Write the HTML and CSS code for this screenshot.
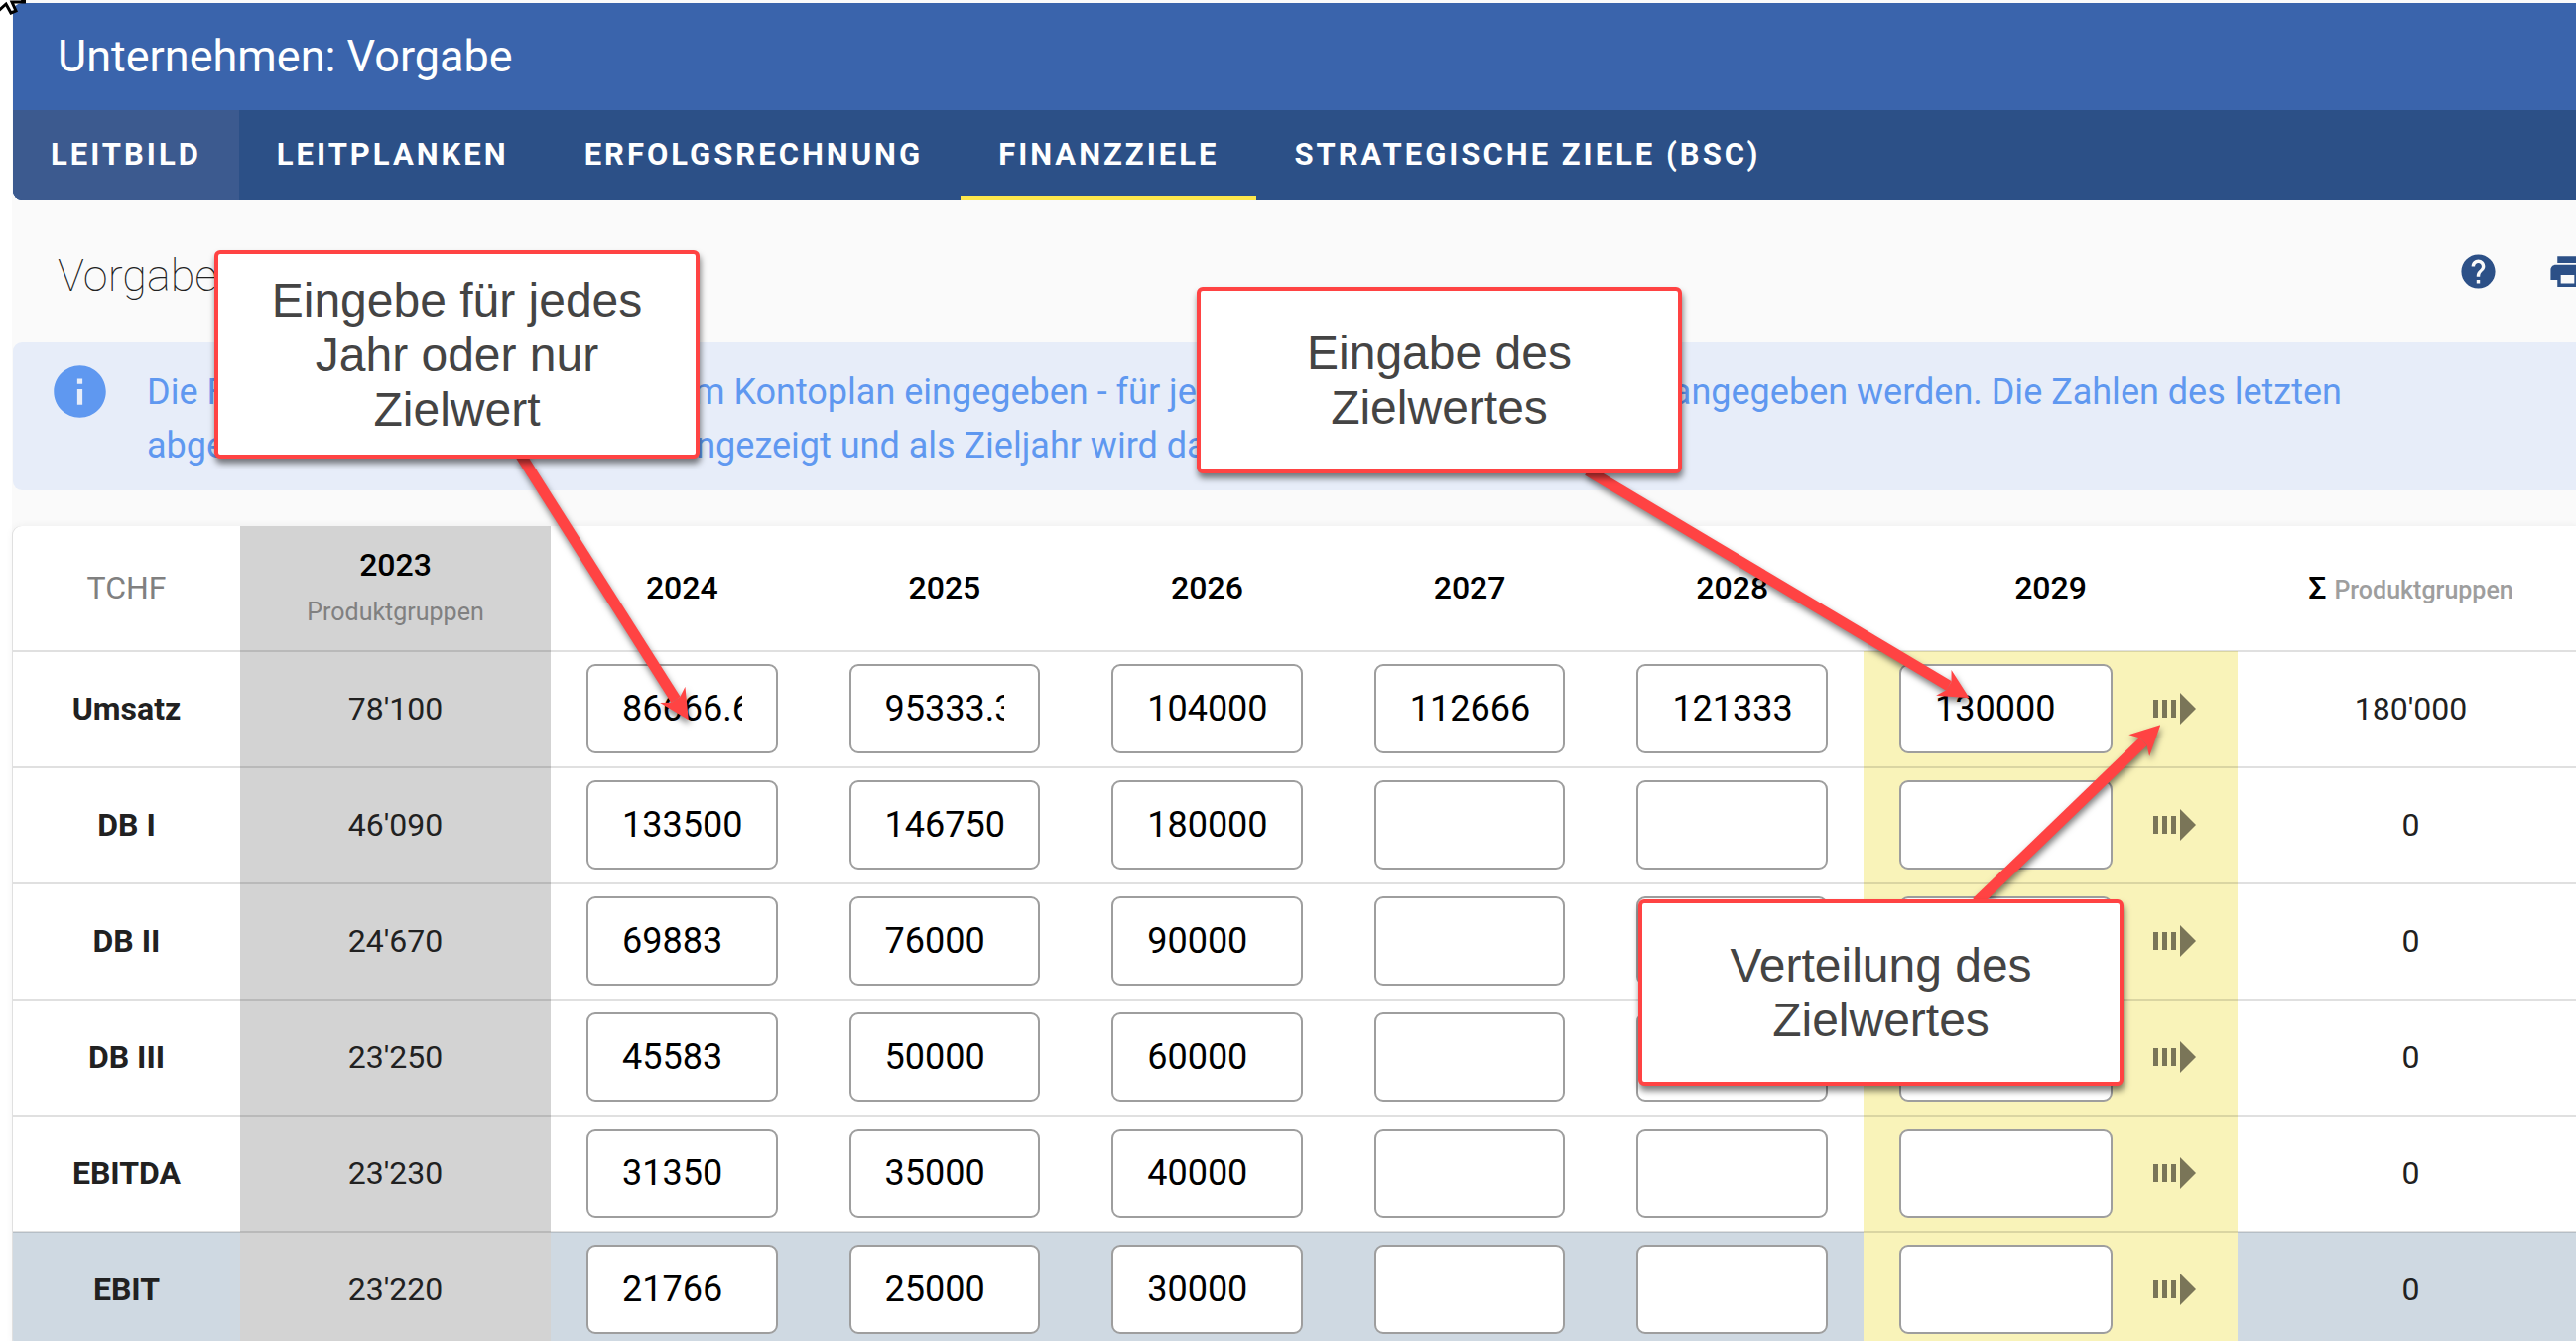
FILE: index.html
```html
<!DOCTYPE html>
<html lang="de">
<head>
    <meta charset="UTF-8">
    <meta name="viewport" content="width=device-width, initial-scale=1.0">
    <title>Unternehmen: Vorgabe</title>
    <link rel="stylesheet" href="styles.css">
</head>
<body>
    <main class="page">
        <header class="app-bar">
            <h1>Unternehmen: Vorgabe</h1>
            <nav class="tabs">
                <a href="#leitbild" class="tab hover">Leitbild</a>
                <a href="#leitplanken" class="tab">Leitplanken</a>
                <a href="#erfolgsrechnung" class="tab">Erfolgsrechnung</a>
                <a href="#finanzziele" class="tab active">Finanzziele</a>
                <a href="#bsc" class="tab">Strategische Ziele (BSC)</a>
            </nav>
        </header>

        <div class="toolbar">
            <h2>Vorgabe</h2>
            <button type="button" class="icon-button" aria-label="Hilfe">
                <svg viewBox="0 0 24 24"><path d="M12 2C6.48 2 2 6.48 2 12s4.48 10 10 10 10-4.48 10-10S17.52 2 12 2zm1 17h-2v-2h2v2zm2.07-7.75l-.9.92C13.45 12.9 13 13.5 13 15h-2v-.5c0-1.1.45-2.1 1.17-2.83l1.24-1.26c.37-.36.59-.86.59-1.41 0-1.1-.9-2-2-2s-2 .9-2 2H8c0-2.21 1.79-4 4-4s4 1.79 4 4c0 .88-.36 1.68-.93 2.25z"/></svg>
            </button>
            <button type="button" class="icon-button" aria-label="Drucken">
                <svg viewBox="0 0 24 24"><path d="M19 8H5c-1.66 0-3 1.34-3 3v6h4v4h12v-4h4v-6c0-1.66-1.34-3-3-3zm-3 11H8v-5h8v5zm3-7c-.55 0-1-.45-1-1s.45-1 1-1 1 .45 1 1-.45 1-1 1zm-1-9H6v4h12V3z"/></svg>
            </button>
        </div>

        <div class="info">
            <svg viewBox="0 0 24 24"><path d="M12 2C6.48 2 2 6.48 2 12s4.48 10 10 10 10-4.48 10-10S17.52 2 12 2zm1 15h-2v-6h2v6zm0-8h-2V7h2v2z"/></svg>
            <p>Die Finanzziele werden gemäss dem Kontoplan eingegeben - für jedes Jahr kann ein Zahlenwert angegeben werden. Die Zahlen des letzten<br>
            abgeschlossenen Jahres werden angezeigt und als Zieljahr wird das letzte Jahr verwendet.</p>
        </div>

        <div class="card">
            <table>
                <colgroup>
                    <col class="col-name">
                    <col class="col-actual">
                    <col span="5">
                    <col class="col-target">
                    <col class="col-sum">
                </colgroup>
                <thead>
                    <tr>
                        <th class="unit">TCHF</th>
                        <th class="actual">2023<small>Produktgruppen</small></th>
                        <th>2024</th>
                        <th>2025</th>
                        <th>2026</th>
                        <th>2027</th>
                        <th>2028</th>
                        <th>2029</th>
                        <th>Σ <small>Produktgruppen</small></th>
                    </tr>
                </thead>
                <tbody id="rows"></tbody>
            </table>
        </div>
    </main>

    <svg class="arrows" aria-hidden="true">
        <defs>
            <marker id="head" markerUnits="userSpaceOnUse" markerWidth="30" markerHeight="30" refX="6" refY="15" orient="auto">
                <path d="M0 0L30 15L0 30L6 20V10z"/>
            </marker>
        </defs>
        <line x1="525" y1="459" x2="681" y2="705"/>
        <line x1="1600" y1="474" x2="1964" y2="691"/>
        <line x1="1992" y1="909" x2="2160" y2="747"/>
    </svg>
    <div class="callout callout-years">Eingebe für jedes<br>Jahr oder nur<br>Zielwert</div>
    <div class="callout callout-target">Eingabe des<br>Zielwertes</div>
    <div class="callout callout-spread">Verteilung des<br>Zielwertes</div>

    <svg class="cursor" viewBox="0 0 26 15" aria-hidden="true">
        <path d="M-4 -20V13L6 4L11 13L16 11L12 2H26z"/>
    </svg>

    <script src="script.js"></script>
</body>
</html>
```
FILE: styles.css
```css
* {
    box-sizing: border-box;
}
body {
    margin: 0;
    height: 100vh;
    position: relative;
    overflow: hidden;
    background: #fff;
    color: #212121;
    font-family: Roboto, sans-serif;
    font-size: 32px;
}
h1, h2, p {
    margin: 0;
}
.page {
    min-height: 100vh;
    margin: 0 -8px 0 12px;
    padding: 3px 0 0 1px;
    background: #fafafa;
}

/* header */
.app-bar {
    background: #3a64ac;
    color: #fff;
    border-radius: 9px;
    overflow: hidden;
}
.app-bar h1 {
    padding: 0 45px;
    font-size: 45px;
    font-weight: 400;
    line-height: 108px;
}
.tabs {
    display: flex;
    background: #2c5087;
}
.tab {
    padding: 0 38px;
    line-height: 90px;
    color: #fff;
    font-size: 31px;
    font-weight: 700;
    letter-spacing: 3px;
    text-transform: uppercase;
    text-decoration: none;
}
.tab.hover {
    background: #3c5a8f;
}
.tab.active {
    box-shadow: inset 0 -4px #fde74c;
}

/* toolbar */
.toolbar {
    display: flex;
    align-items: center;
    height: 144px;
    margin-right: -28px;
    padding-left: 45px;
}
.toolbar h2 {
    flex: 1;
    padding-top: 9px;
    font-size: 45px;
    font-weight: 100;
}
.icon-button {
    display: flex;
    justify-content: center;
    align-items: center;
    width: 90px;
    height: 90px;
    padding: 0;
    border: none;
    background: none;
    cursor: pointer;
}
.icon-button svg {
    width: 41px;
    height: 41px;
    fill: #2c5087;
}

/* info box */
.info {
    display: flex;
    gap: 36px;
    margin-bottom: 36px;
    padding: 18px 36px;
    border-radius: 9px;
    background: #e7edf9;
    color: #5f98f0;
    font-size: 36px;
    line-height: 54px;
}
.info svg {
    flex: none;
    width: 63px;
    height: 63px;
    fill: #5f98f0;
}
.info p {
    padding-top: 5px;
    white-space: nowrap;
}

/* table */
.card {
    border-radius: 9px;
    overflow: hidden;
    background: #fff;
    box-shadow: -1px 0 #e0e0e0, 0 0 9px rgba(0,0,0,0.06);
}
table {
    width: 100%;
    table-layout: fixed;
    border-collapse: collapse;
}
.col-name { width: 229px; }
.col-actual { width: 313px; }
.col-target { width: 377px; }
.col-sum { width: 349px; }
th, td {
    height: 117px;
    padding: 0 36px 2px;
    text-align: center;
}
thead th {
    height: 126px;
    padding: 0 0 2px;
    color: #000;
    font-weight: 500;
}
tbody tr {
    border-top: 2px solid rgba(0,0,0,0.12);
}
thead th.unit {
    color: #808080;
    font-weight: 400;
}
th small {
    color: #9e9e9e;
    font-size: 25px;
}
.actual {
    background: #d3d3d3;
}
thead th.actual {
    padding: 0;
    line-height: 47px;
}
th.actual small {
    display: block;
    color: #808080;
    font-weight: 400;
}
tbody th {
    padding: 0 0 2px;
    font-weight: 700;
}
tr.highlight {
    background: #cfd9e2;
}
td.target {
    padding: 0 18px 2px 36px;
    background: #f9f3b9;
}
.target-field {
    display: flex;
    align-items: center;
    gap: 18px;
}
input {
    display: block;
    width: 100%;
    height: 90px;
    padding: 0 34px;
    border: 2px solid #9e9e9e;
    border-radius: 9px;
    background: #fff;
    color: #000;
    font-family: inherit;
    font-size: 36px;
}
.target-field .icon-button {
    flex: none;
}
.target-field svg {
    width: 44px;
    height: 32px;
    fill: #7a7558;
}

/* annotations */
.arrows {
    position: absolute;
    top: 0;
    left: 0;
    width: 100%;
    height: 100%;
    pointer-events: none;
    filter: drop-shadow(1px 4px 3px rgba(0,0,0,0.5));
}
.arrows line {
    stroke: #ff4343;
    stroke-width: 11;
    marker-end: url(#head);
}
.arrows path {
    fill: #ff4343;
}
.callout {
    position: absolute;
    display: flex;
    align-items: center;
    justify-content: center;
    width: 489px;
    height: 188px;
    border: 4px solid #ff4343;
    border-radius: 6px;
    background: #fff;
    box-shadow: 1px 5px 6px rgba(0,0,0,0.5);
    color: #444;
    font-family: "Liberation Sans", Arial, sans-serif;
    font-size: 48px;
    line-height: 55px;
    text-align: center;
}
.callout-years {
    top: 252px;
    left: 216px;
    height: 210px;
}
.callout-target {
    top: 289px;
    left: 1206px;
}
.callout-spread {
    top: 906px;
    left: 1651px;
}
.cursor {
    position: absolute;
    top: 0;
    left: 0;
    width: 26px;
    height: 15px;
    fill: #fff;
    stroke: #000;
    stroke-width: 3;
}
```
FILE: script.js
```javascript
const rows = [
    { name: 'Umsatz', actual: "78'100", years: ['86666.67', '95333.33', '104000', '112666', '121333'], target: '130000', sum: "180'000" },
    { name: 'DB I', actual: "46'090", years: ['133500', '146750', '180000', '', ''], target: '', sum: '0' },
    { name: 'DB II', actual: "24'670", years: ['69883', '76000', '90000', '', ''], target: '', sum: '0' },
    { name: 'DB III', actual: "23'250", years: ['45583', '50000', '60000', '', ''], target: '', sum: '0' },
    { name: 'EBITDA', actual: "23'230", years: ['31350', '35000', '40000', '', ''], target: '', sum: '0' },
    { name: 'EBIT', actual: "23'220", years: ['21766', '25000', '30000', '', ''], target: '', sum: '0', highlight: true }
];

document.getElementById('rows').innerHTML = rows.map(row => `
    <tr class="${row.highlight ? 'highlight' : ''}">
        <th>${row.name}</th>
        <td class="actual">${row.actual}</td>
        ${row.years.map((value, i) => `<td><input type="text" value="${value}" aria-label="${row.name} ${2024 + i}"></td>`).join('')}
        <td class="target">
            <div class="target-field">
                <input type="text" value="${row.target}" aria-label="${row.name} 2029">
                <button type="button" class="icon-button" aria-label="${row.name} verteilen">
                    <svg viewBox="0 0 44 32"><path d="M0 7h5v18H0zM9 7h5v18H9zM18 7h5v18h-5zM27 0l16 16-16 16z"/></svg>
                </button>
            </div>
        </td>
        <td>${row.sum}</td>
    </tr>
`).join('');
```
